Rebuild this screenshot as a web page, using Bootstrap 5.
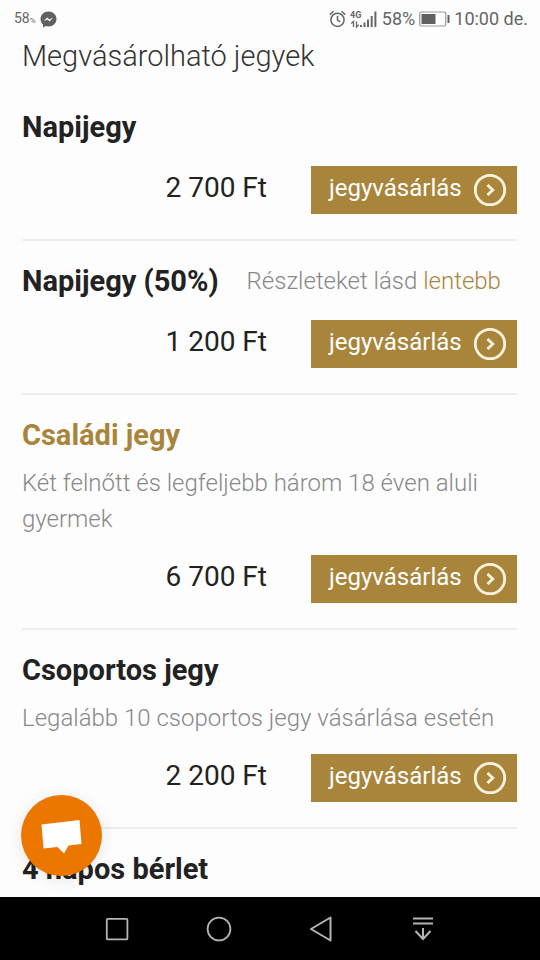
<!DOCTYPE html>
<html lang="hu">
<head>
<meta charset="utf-8">
<meta name="viewport" content="width=device-width, initial-scale=1">
<title>Megvásárolható jegyek</title>
<link href="https://cdn.jsdelivr.net/npm/bootstrap@5.3.0/dist/css/bootstrap.min.css" rel="stylesheet">
<style>
  :root { --gold: #a9853c; --ink: #222; --muted: #888; }
  body { font-family: Roboto, "Noto Sans", sans-serif; background: #fdfdfd; color: var(--ink); }
  .status-bar { height: 38px; padding: 0 12px 0 14px; color: #666; font-size: 18px; line-height: 24px; }
  .status-small { font-size: 14px; }
  .status-small small { font-size: 8px; }
  .page-pad { padding: 0 23px 0 22px; }
  .page-title { font-size: 29px; font-weight: 300; line-height: 36px; margin-bottom: 13px; color: #333; }
  .ticket { padding: 22px 0 25px; border-bottom: 2px solid #eee; }
  .ticket-name { font-size: 29px; font-weight: 700; line-height: 36px; margin: 0; }
  .ticket-head { column-gap: 28px; }
  .ticket-note { font-size: 24px; font-weight: 300; line-height: 36px; color: var(--muted); margin: 0; }
  .ticket-note-block { padding-top: 12px; }
  .ticket-buy { margin-top: 21px; gap: 44px; }
  .ticket-note-block + .ticket-buy { margin-top: 18px; }
  .price { font-size: 28px; line-height: 44px; }
  .gold, .gold:hover { color: var(--gold); }
  .btn-buy { --bs-btn-bg: var(--gold); --bs-btn-color: #fff; --bs-btn-hover-bg: #987631; --bs-btn-hover-color: #fff;
    --bs-btn-active-bg: #987631; --bs-btn-active-color: #fff; --bs-btn-border-width: 0; --bs-btn-border-radius: 0;
    width: 206px; height: 48px; padding: 0 10px 0 18px; font-size: 24px; line-height: 36px; }
  .btn-buy span { padding-bottom: 4px; }
  .chat-btn { bottom: 84px; left: 21px; width: 81px; height: 81px; background: #eb7700; box-shadow: 0 3px 16px rgba(0,0,0,.1); }
  .system-nav { height: 63px; background: #000; }
  .system-nav button { width: 102px; }
</style>
<script src="https://cdn.jsdelivr.net/npm/bootstrap@5.3.0/dist/js/bootstrap.bundle.min.js"></script>
</head>
<body class="vh-100 d-flex flex-column overflow-hidden">
<svg class="d-none">
  <symbol id="chevron-circle" viewBox="0 0 34 34"><g fill="none" stroke="#fff3df"><circle cx="17" cy="17" r="14.700" stroke-width="2.800"/><path d="M14.500 12l5.300 5-5.300 5" stroke-width="2.800"/></g></symbol>
</svg>

<header class="status-bar d-flex align-items-center justify-content-between flex-shrink-0">
  <div class="d-flex align-items-center gap-1">
    <span class="status-small">58<small>%</small></span>
    <svg width="17" height="17" viewBox="0 0 17 17" aria-label="Messenger"><path d="M8.500.5C4 .5.5 3.800.5 8c0 2.200 1 4.100 2.500 5.500V16.500l2.800-1.400c.8.200 1.700.400 2.700.400 4.500 0 8-3.300 8-7.500S13 .5 8.500.5z" fill="#606060"/><path d="M3.600 10.300l3.500-3.700 2.300 2 3.800-2-3.600 3.800-2.200-2z" fill="#fff"/></svg>
  </div>
  <div class="d-flex align-items-center">
    <svg width="17" height="18" viewBox="0 0 17 18" class="me-1" aria-label="Ébresztő"><g fill="none" stroke="#666" stroke-width="1.500"><circle cx="8.500" cy="9.800" r="6.600"/><path d="M8.500 5.800V10l2.800 2M.8 4.600L4.500 1.300M16.200 4.600L12.500 1.300"/></g></svg>
    <svg width="28" height="18" viewBox="0 0 28 18" class="me-1" aria-label="4G térerő"><text x="0" y="8" font-size="9" font-weight="700" fill="#666">4G</text><path d="M3.500 17v-5.500L1.200 13.500M6.500 11.500V17l2.300-2.200" fill="none" stroke="#666" stroke-width="1.300"/><path d="M10 15h2v2h-2zM13.500 12.500h2V17h-2zM17 9.500h2V17h-2zM20.700 6h2v11h-2zM24.400 1.500h2V17h-2z" fill="#666"/></svg>
    <span>58%</span>
    <svg width="31" height="16" viewBox="0 0 31 16" class="mx-1" aria-label="Akkumulátor"><rect x=".7" y="1" width="26" height="14" rx="1.500" fill="none" stroke="#999" stroke-width="1.200"/><path d="M2.500 3h14v10h-14zM28.500 4h2v8h-2z" fill="#606060"/></svg>
    <span>10:00 de.</span>
  </div>
</header>

<main class="page-pad flex-grow-1 overflow-hidden">
  <h1 class="page-title">Megvásárolható jegyek</h1>

  <section class="ticket">
    <h2 class="ticket-name">Napijegy</h2>
    <div class="ticket-buy d-flex justify-content-end">
      <span class="price">2 700 Ft</span>
      <button type="button" class="btn btn-buy d-flex align-items-center justify-content-between"><span>jegyvásárlás</span><svg width="34" height="34" aria-hidden="true"><use href="#chevron-circle"/></svg></button>
    </div>
  </section>

  <section class="ticket">
    <div class="ticket-head d-flex flex-wrap align-items-center">
      <h2 class="ticket-name">Napijegy (50%)</h2>
      <p class="ticket-note">Részleteket lásd <a href="#lentebb" class="gold text-decoration-none">lentebb</a></p>
    </div>
    <div class="ticket-buy d-flex justify-content-end">
      <span class="price">1 200 Ft</span>
      <button type="button" class="btn btn-buy d-flex align-items-center justify-content-between"><span>jegyvásárlás</span><svg width="34" height="34" aria-hidden="true"><use href="#chevron-circle"/></svg></button>
    </div>
  </section>

  <section class="ticket">
    <h2 class="ticket-name gold">Családi jegy</h2>
    <p class="ticket-note ticket-note-block">Két felnőtt és legfeljebb három 18 éven aluli gyermek</p>
    <div class="ticket-buy d-flex justify-content-end">
      <span class="price">6 700 Ft</span>
      <button type="button" class="btn btn-buy d-flex align-items-center justify-content-between"><span>jegyvásárlás</span><svg width="34" height="34" aria-hidden="true"><use href="#chevron-circle"/></svg></button>
    </div>
  </section>

  <section class="ticket">
    <h2 class="ticket-name">Csoportos jegy</h2>
    <p class="ticket-note ticket-note-block">Legalább 10 csoportos jegy vásárlása esetén</p>
    <div class="ticket-buy d-flex justify-content-end">
      <span class="price">2 200 Ft</span>
      <button type="button" class="btn btn-buy d-flex align-items-center justify-content-between"><span>jegyvásárlás</span><svg width="34" height="34" aria-hidden="true"><use href="#chevron-circle"/></svg></button>
    </div>
  </section>

  <section class="ticket" id="lentebb">
    <h2 class="ticket-name">4 napos bérlet</h2>
  </section>
</main>

<button type="button" class="chat-btn position-fixed border-0 rounded-circle p-0 d-flex align-items-center justify-content-center" aria-label="Csevegés">
  <svg width="81" height="81" viewBox="0 0 81 81"><path d="M20.500 29.500L58.500 25l2 24-13 1.500-4.500 8-6.500-6.500-14 1.500z" fill="#fff"/></svg>
</button>

<nav class="system-nav d-flex justify-content-center flex-shrink-0" aria-label="Rendszer">
  <button type="button" class="btn border-0 p-0" aria-label="Áttekintés"><svg width="28" height="28" viewBox="0 0 28 28" fill="none" stroke="#b4b4b4" stroke-width="1.800"><rect x="3.800" y="3.800" width="20.600" height="20.600" rx="1"/></svg></button>
  <button type="button" class="btn border-0 p-0" aria-label="Kezdőlap"><svg width="28" height="28" viewBox="0 0 28 28" fill="none" stroke="#b4b4b4" stroke-width="1.800"><circle cx="14" cy="14" r="11.400"/></svg></button>
  <button type="button" class="btn border-0 p-0" aria-label="Vissza"><svg width="28" height="28" viewBox="0 0 28 28" fill="none" stroke="#b4b4b4" stroke-width="2" stroke-linejoin="round"><path d="M23.500 2.500v23L4 14z"/></svg></button>
  <button type="button" class="btn border-0 p-0" aria-label="Értesítések"><svg width="28" height="28" viewBox="0 0 28 28" fill="none" stroke="#b4b4b4" stroke-width="2"><path d="M4 3.500h20M4 8.500h20M14 13v11M6.500 16l7.500 8 7.500-8"/></svg></button>
</nav>
</body>
</html>
